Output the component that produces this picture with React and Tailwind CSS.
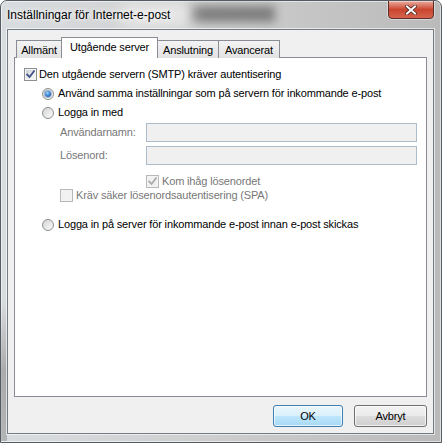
import React from "react";

const font = { fontFamily: '"Liberation Sans", Arial, sans-serif' };

function Checkbox({ checked, disabled }) {
  return (
    <div
      className={`w-[13px] h-[13px] shrink-0 border p-[1px] ${
        disabled ? "border-[#b8b8b8] bg-[#f4f4f4]" : "border-[#8e8f8f] bg-[#f4f4f4]"
      }`}
    >
      <div
        className={`w-full h-full relative ${
          disabled
            ? "bg-[#f1f1f1]"
            : "bg-gradient-to-br from-[#cbcfd5] via-[#e6e8ea] to-[#f7f7f7]"
        }`}
      >
        {checked && (
          <svg viewBox="0 0 9 9" className="absolute inset-0 w-[9px] h-[9px]">
            <path
              d="M1.2 4.6 L3.6 7 L8 1.2"
              fill="none"
              stroke={disabled ? "#a9a9a9" : "#3b4f86"}
              strokeWidth="1.8"
              strokeLinecap="square"
            />
          </svg>
        )}
      </div>
    </div>
  );
}

function Radio({ checked }) {
  return (
    <div className="w-[12px] h-[12px] shrink-0 rounded-full border border-[#8e8f8f] bg-gradient-to-br from-[#d2d4d7] to-[#fbfbfb] flex items-center justify-center">
      {checked && (
        <div className="w-[6px] h-[6px] rounded-full bg-[radial-gradient(circle_at_40%_35%,#a8dbff_0%,#3a86d6_45%,#173f8a_100%)] shadow-[0_0_0_1px_rgba(40,90,160,0.35)]" />
      )}
    </div>
  );
}

export default function App() {
  return (
    <div
      style={font}
      className="relative w-[442px] h-[443px] overflow-hidden rounded-t-[7px] border border-[#555b62] bg-gradient-to-r from-[#d9dcdf] via-[#cdcdcd] to-[#bababa] text-[11px] tracking-[-0.15px] text-black flex flex-col"
    >
      {/* glass highlight */}
      <div className="absolute inset-0 rounded-t-[6px] border border-[rgba(255,255,255,0.55)] pointer-events-none" />
      {/* blurred background shapes behind glass */}
      <div className="absolute left-[188px] top-[5px] w-[86px] h-[16px] bg-[#7e7e7e] blur-[5px]" />
      <div className="absolute left-[120px] top-[2px] w-[70px] h-[24px] bg-[#e8e8e8] blur-[8px]" />
      <div className="absolute left-0 top-[300px] w-[6px] h-[140px] bg-gradient-to-b from-transparent via-[#8a8a8a] to-[#9a9a9a] opacity-60" />

      {/* title bar */}
      <div className="relative h-[28px] flex items-start pl-[6px] pr-[7px] shrink-0">
        <div className="pt-[7px] text-[12px] tracking-normal leading-[14px] [text-shadow:0_0_8px_#ffffff,0_0_4px_#ffffff]">
          Inställningar för Internet-e-post
        </div>
        <div className="flex-1" />
        <div className="w-[46px] h-[19px] -mt-px rounded-b-[4px] border border-[#5b2e27] bg-gradient-to-b from-[#e8ab9f] via-[#c9452e] to-[#d6634e] shadow-[inset_0_1px_0_rgba(255,255,255,0.45),0_0_0_1px_rgba(255,255,255,0.4)] flex items-center justify-center">
          <svg viewBox="0 0 12 10" className="w-[12px] h-[10px]">
            <path d="M2 1.5 L10 8.5 M10 1.5 L2 8.5" stroke="#4a2620" strokeWidth="3.6" strokeLinecap="square" />
            <path d="M2 1.5 L10 8.5 M10 1.5 L2 8.5" stroke="#ffffff" strokeWidth="2" strokeLinecap="square" />
          </svg>
        </div>
      </div>

      {/* client area */}
      <div className="relative mx-[6px] mr-[7px] mb-[8px] flex-1 border border-[#747b84] bg-[#f0f0f0] flex flex-col px-[6px] pt-[7px] shadow-[0_0_0_1px_rgba(255,255,255,0.6)]">
        {/* tabs */}
        <div className="relative z-10 h-[21px] flex items-end pl-[2px]">
          <div className="w-[46px] h-[18px] border border-b-0 border-[#898c95] bg-gradient-to-b from-[#f3f3f3] to-[#e2e2e2] flex items-center justify-center pt-[1px]">
            Allmänt
          </div>
          <div className="-ml-px w-[97px] h-[21px] border border-b-0 border-[#898c95] bg-white flex items-center justify-center pb-[2px]">
            Utgående server
          </div>
          <div className="-ml-px w-[62px] h-[18px] border border-b-0 border-[#898c95] bg-gradient-to-b from-[#f3f3f3] to-[#e2e2e2] flex items-center justify-center pt-[1px]">
            Anslutning
          </div>
          <div className="-ml-px w-[62px] h-[18px] border border-b-0 border-[#898c95] bg-gradient-to-b from-[#f3f3f3] to-[#e2e2e2] flex items-center justify-center pt-[1px]">
            Avancerat
          </div>
        </div>

        {/* panel */}
        <div className="-mt-px h-[340px] border border-[#898c95] bg-white flex flex-col pt-[7px]">
          <div className="h-[19px] flex items-center pl-[9px] gap-[2px]">
            <Checkbox checked />
            <span>Den utgående servern (SMTP) kräver autentisering</span>
          </div>
          <div className="h-[19px] flex items-center pl-[27px] gap-[4px]">
            <Radio checked />
            <span>Använd samma inställningar som på servern för inkommande e-post</span>
          </div>
          <div className="h-[19px] flex items-center pl-[27px] gap-[4px]">
            <Radio />
            <span>Logga in med</span>
          </div>
          <div className="mt-[1px] h-[19px] flex items-center pl-[45px]">
            <span className="w-[86px] text-[#777777]">Användarnamn:</span>
            <div className="w-[271px] h-[19px] border border-[#adbccb] bg-[#f0f0f0]" />
          </div>
          <div className="mt-[4px] h-[19px] flex items-center pl-[45px]">
            <span className="w-[86px] text-[#777777]">Lösenord:</span>
            <div className="w-[271px] h-[19px] border border-[#adbccb] bg-[#f0f0f0]" />
          </div>
          <div className="mt-[9px] h-[14px] flex items-center pl-[131px] gap-[3px] text-[#777777]">
            <Checkbox checked disabled />
            <span>Kom ihåg lösenordet</span>
          </div>
          <div className="h-[14px] flex items-center pl-[45px] gap-[3px] text-[#777777]">
            <Checkbox disabled />
            <span>Kräv säker lösenordsautentisering (SPA)</span>
          </div>
          <div className="mt-[13px] h-[19px] flex items-center pl-[27px] gap-[4px]">
            <Radio />
            <span>Logga in på server för inkommande e-post innan e-post skickas</span>
          </div>
        </div>

        {/* buttons */}
        <div className="mt-[8px] flex justify-end gap-[11px]">
          <div className="w-[70px] h-[22px] rounded-[3px] border border-[#3c7fb1] bg-[linear-gradient(to_bottom,#eaf6fd_0%,#d9f0fc_50%,#bee6fd_51%,#a7d9f5_100%)] shadow-[inset_0_0_0_1px_rgba(255,255,255,0.7)] flex items-center justify-center">
            OK
          </div>
          <div className="w-[73px] h-[22px] rounded-[3px] border border-[#707070] bg-[linear-gradient(to_bottom,#f2f2f2_0%,#ebebeb_50%,#dddddd_51%,#cfcfcf_100%)] shadow-[inset_0_0_0_1px_rgba(255,255,255,0.7)] flex items-center justify-center">
            Avbryt
          </div>
        </div>
      </div>
    </div>
  );
}
